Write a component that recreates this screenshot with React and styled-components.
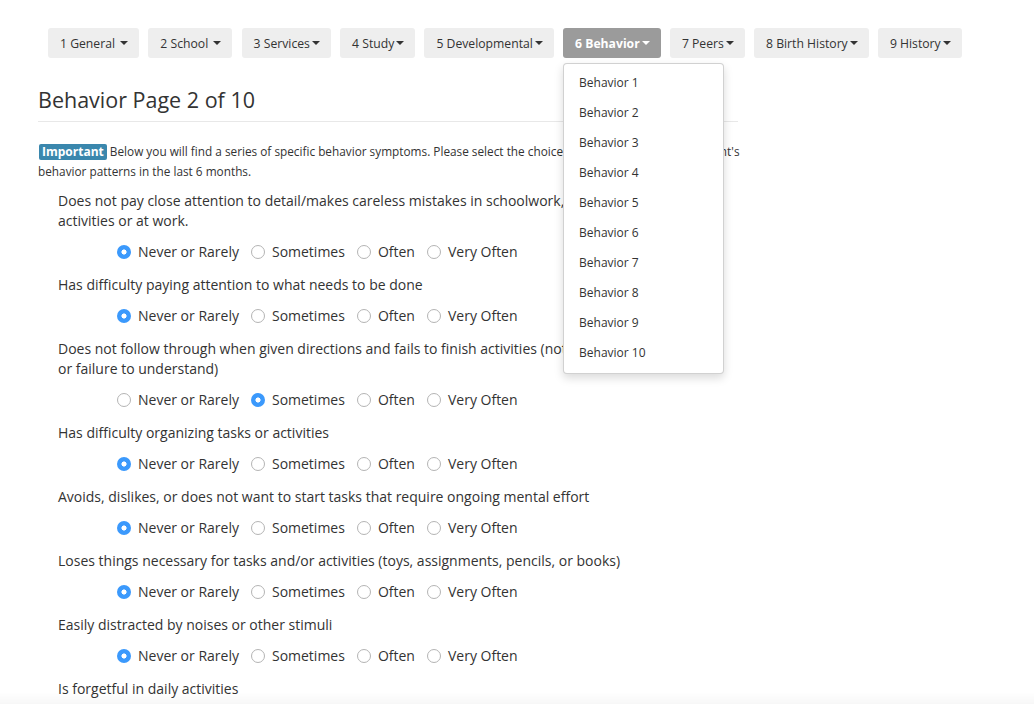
import { useState } from "react"
import styled, { createGlobalStyle } from "styled-components"

const GlobalStyle = createGlobalStyle`
  html, body {
    margin: 0;
    padding: 0;
    background: #fff;
  }
  body {
    font-family: "Open Sans", "Noto Sans", sans-serif;
    color: #333;
  }
`

const Page = styled.div`
  width: 700px;
  padding: 28px 0 0 38px;
`

const Nav = styled.nav`
  display: flex;
  gap: 9.2px;
  padding-left: 10px;
`

const NavItem = styled.div`
  position: relative;
`

const NavButton = styled.button`
  display: flex;
  align-items: center;
  height: 30px;
  padding: 0 11px 0 12px;
  border: 0;
  border-radius: 3px;
  background: ${({ $active }) => ($active ? "#9b9b9b" : "#eeeeee")};
  color: ${({ $active }) => ($active ? "#fff" : "#333")};
  font-family: inherit;
  font-size: 12.2px;
  font-weight: ${({ $active }) => ($active ? 700 : 400)};
  white-space: pre;
  cursor: pointer;
`

const Caret = styled.span`
  display: inline-block;
  width: 0;
  height: 0;
  margin-left: 2px;
  border-top: 4px solid currentColor;
  border-left: 4px solid transparent;
  border-right: 4px solid transparent;
`

const Menu = styled.ul`
  position: absolute;
  top: 35px;
  left: 0;
  z-index: 10;
  width: 161px;
  box-sizing: border-box;
  margin: 0;
  padding: 4px 0 5px;
  list-style: none;
  background: #fff;
  border: 1px solid rgba(0, 0, 0, 0.18);
  border-radius: 4px;
  box-shadow: 0 4px 10px rgba(0, 0, 0, 0.15);
`

const MenuItem = styled.li`
  height: 30px;
  line-height: 30px;
  padding-left: 15px;
  font-size: 12px;
  color: #333;
`

const Heading = styled.h1`
  margin: 29px 0 19px;
  padding-bottom: 8px;
  border-bottom: 1px solid #e8e8e8;
  font-size: 21.5px;
  font-weight: 400;
  line-height: 26px;
  color: #333;
`

const Intro = styled.p`
  margin: 0 -18px 10px 0;
  font-size: 11.8px;
  line-height: 20px;
`

const Label = styled.span`
  display: inline-block;
  margin-left: 1px;
  padding: 0 3px;
  line-height: 16px;
  border-radius: 2px;
  background: #3a87ad;
  color: #fff;
  font-size: 12px;
  font-weight: 700;
`

const Question = styled.div`
  margin: 0 0 13px 20px;
`

const Prompt = styled.div`
  margin-bottom: 10px;
  font-size: 14px;
  line-height: 20px;
  white-space: pre-line;
`

const Choices = styled.div`
  display: flex;
  align-items: center;
  gap: 12px;
  height: 21px;
  padding-left: 59px;
`

const Choice = styled.label`
  display: flex;
  align-items: center;
  gap: 7px;
  font-size: 14px;
  line-height: 20px;
`

const Radio = styled.input`
  appearance: none;
  width: 14px;
  height: 14px;
  margin: 0;
  border-radius: 50%;
  border: 1px solid #b4b4b4;
  background: #fff;
  box-sizing: border-box;

  &:checked {
    border: 0;
    background: radial-gradient(circle, #fff 0 2.3px, #3b99fc 2.8px);
  }
`

const BottomFade = styled.div`
  position: fixed;
  left: 0;
  right: 0;
  bottom: 0;
  height: 12px;
  background: linear-gradient(rgba(0, 0, 0, 0), rgba(0, 0, 0, 0.03));
  pointer-events: none;
`

const tabs = [
  "1 General ",
  "2 School ",
  "3 Services",
  "4 Study",
  "5 Developmental",
  "6 Behavior",
  "7 Peers",
  "8 Birth History",
  "9 History",
]

const options = ["Never or Rarely", "Sometimes", "Often", "Very Often"]

const questions = [
  { text: "Does not pay close attention to detail/makes careless mistakes in schoolwork, chores,\nactivities or at work.", answer: 0 },
  { text: "Has difficulty paying attention to what needs to be done", answer: 0 },
  { text: "Does not follow through when given directions and fails to finish activities (not due to refusal\nor failure to understand)", answer: 1 },
  { text: "Has difficulty organizing tasks or activities", answer: 0 },
  { text: "Avoids, dislikes, or does not want to start tasks that require ongoing mental effort", answer: 0 },
  { text: "Loses things necessary for tasks and/or activities (toys, assignments, pencils, or books)", answer: 0 },
  { text: "Easily distracted by noises or other stimuli", answer: 0 },
  { text: "Is forgetful in daily activities", answer: -1 },
]

export default function App() {
  const [answers, setAnswers] = useState(questions.map((q) => q.answer))

  const pick = (qi, oi) => {
    setAnswers((prev) => prev.map((a, i) => (i === qi ? oi : a)))
  }

  return (
    <>
      <GlobalStyle />
      <Page>
        <Nav>
          {tabs.map((tab) => {
            const active = tab === "6 Behavior"
            return (
              <NavItem key={tab}>
                <NavButton $active={active}>
                  {tab}
                  <Caret />
                </NavButton>
                {active && (
                  <Menu>
                    {Array.from({ length: 10 }, (_, i) => (
                      <MenuItem key={i}>Behavior {i + 1}</MenuItem>
                    ))}
                  </Menu>
                )}
              </NavItem>
            )
          })}
        </Nav>

        <Heading>Behavior Page 2 of 10</Heading>

        <Intro>
          <Label>Important</Label> Below you will find a series of specific behavior symptoms. Please select the choice that best describes your client's behavior patterns in the last 6 months.
        </Intro>

        {questions.map((q, qi) => (
          <Question key={qi}>
            <Prompt>{q.text}</Prompt>
            <Choices>
              {options.map((opt, oi) => (
                <Choice key={opt}>
                  <Radio
                    type="radio"
                    name={`q${qi}`}
                    checked={answers[qi] === oi}
                    onChange={() => pick(qi, oi)}
                  />
                  {opt}
                </Choice>
              ))}
            </Choices>
          </Question>
        ))}
      </Page>
      <BottomFade />
    </>
  )
}
